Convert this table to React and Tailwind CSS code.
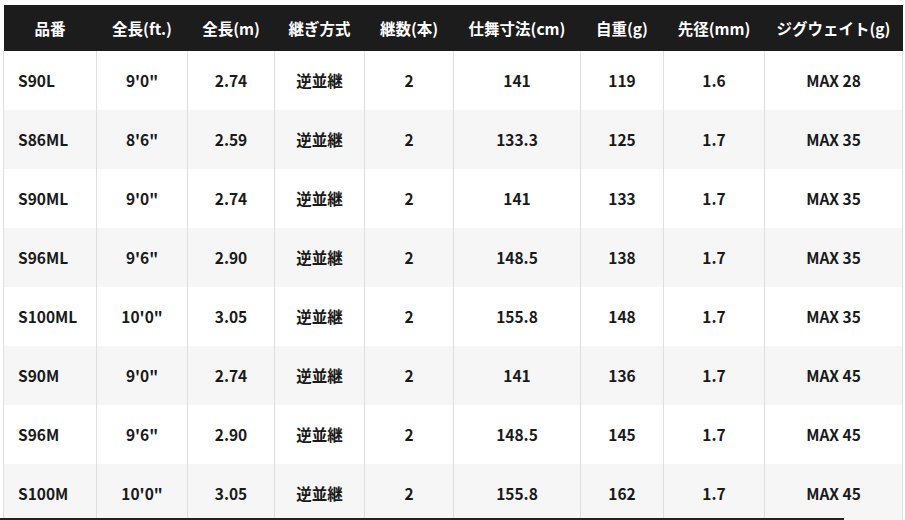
const cols = [
  { label: '品番', w: 'w-[93px]' },
  { label: '全長(ft.)', w: 'w-[91px]' },
  { label: '全長(m)', w: 'w-[87px]' },
  { label: '継ぎ方式', w: 'w-[90px]' },
  { label: '継数(本)', w: 'w-[89px]' },
  { label: '仕舞寸法(cm)', w: 'w-[127px]' },
  { label: '自重(g)', w: 'w-[83px]' },
  { label: '先径(mm)', w: 'w-[101px]' },
  { label: 'ジグウェイト(g)', w: 'w-[138px]' },
];

const rows = [
  ['S90L', `9'0"`, '2.74', '逆並継', '2', '141', '119', '1.6', 'MAX 28'],
  ['S86ML', `8'6"`, '2.59', '逆並継', '2', '133.3', '125', '1.7', 'MAX 35'],
  ['S90ML', `9'0"`, '2.74', '逆並継', '2', '141', '133', '1.7', 'MAX 35'],
  ['S96ML', `9'6"`, '2.90', '逆並継', '2', '148.5', '138', '1.7', 'MAX 35'],
  ['S100ML', `10'0"`, '3.05', '逆並継', '2', '155.8', '148', '1.7', 'MAX 35'],
  ['S90M', `9'0"`, '2.74', '逆並継', '2', '141', '136', '1.7', 'MAX 45'],
  ['S96M', `9'6"`, '2.90', '逆並継', '2', '148.5', '145', '1.7', 'MAX 45'],
  ['S100M', `10'0"`, '3.05', '逆並継', '2', '155.8', '162', '1.7', 'MAX 45'],
];

export default function App() {
  return (
    <div className="relative h-[520px] overflow-hidden bg-white pt-[5px] pl-[3px] font-['Noto_Sans_CJK_JP','Noto_Sans',sans-serif] font-bold text-[#1a1a1a]">
      <table className="w-[899px] table-fixed border-collapse text-[15.5px]">
        <thead>
          <tr className="h-[46px] bg-[#1c1c1c] text-white">
            {cols.map((c) => (
              <th key={c.label} className={`${c.w} p-0 pt-px text-center font-bold`}>
                {c.label}
              </th>
            ))}
          </tr>
        </thead>
        <tbody>
          {rows.map((r, i) => (
            <tr key={r[0]} className={`h-[59px] ${i % 2 ? 'bg-[#f6f6f6]' : 'bg-white'}`}>
              {r.map((v, j) => (
                <td
                  key={j}
                  className={`border-x border-[#dedede] p-0 pt-px ${j === 0 ? 'pl-[14px] text-left' : 'text-center'}`}
                >
                  {v}
                </td>
              ))}
            </tr>
          ))}
        </tbody>
      </table>
      {/* scrollbar thumb at the bottom edge */}
      <div className="absolute bottom-0 left-0 h-[2px] w-[844px] bg-[#222]" />
    </div>
  );
}
